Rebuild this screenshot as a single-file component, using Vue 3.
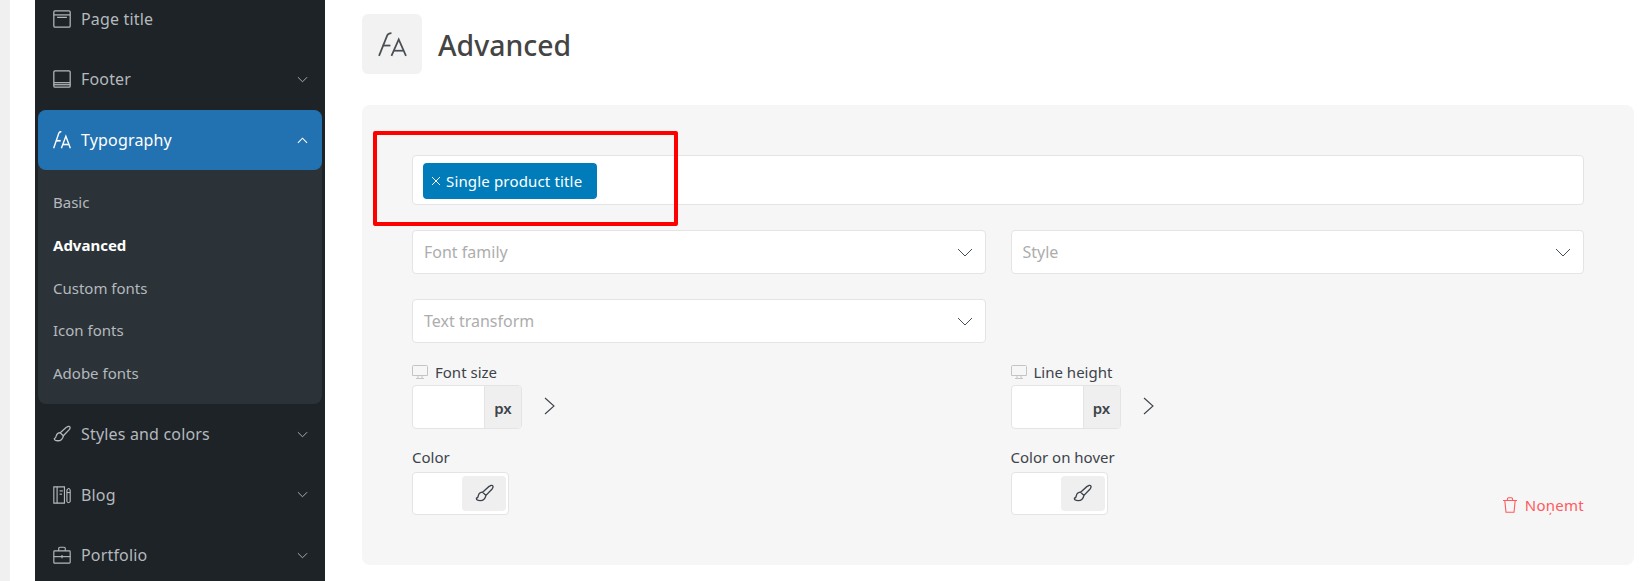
<script setup>
const fa = ['M1 23 L9 3 Q10 1 13 1', 'M4.5 13 H12', 'M13 23 L20 7 L27 23', 'M15.5 18 H24.5']
const brush = ['M17 1.5 Q18.8 1 19 3 Q19 4 18 5.2 L11.5 12 L8 8.6 L14.5 2.8 Z', 'M8 8.6 Q4.5 8.6 3.6 12 Q3.4 14.4 1.5 15 Q1.3 17.5 5.5 17.5 Q10.5 17.5 11.5 12']
const top = [
  { label: 'Page title', icon: ['M2.5 1 H19.5 Q21 1 21 2.5 V19.5 Q21 21 19.5 21 H2.5 Q1 21 1 19.5 V2.5 Q1 1 2.5 1 Z', 'M1 6 H21', 'M5 9 H17'], chevron: false },
  { label: 'Footer', icon: ['M2.5 1 H19.5 Q21 1 21 2.5 V19.5 Q21 21 19.5 21 H2.5 Q1 21 1 19.5 V2.5 Q1 1 2.5 1 Z', 'M1 15.5 H21', 'M1 18 H21'], chevron: true }
]
const sub = ['Basic', 'Advanced', 'Custom fonts', 'Icon fonts', 'Adobe fonts']
const bottom = [
  { label: 'Styles and colors', icon: brush, box: '0 0 20 20' },
  { label: 'Blog', icon: ['M1 1 H14 V21 H1 Z', 'M5 1 V21', 'M8 6 H12', 'M8 10 H11', 'M17 5 Q19.5 1 21 5 V19 Q19 22 17 19 Z', 'M17 8 H21'], box: '0 0 22 22' },
  { label: 'Portfolio', icon: ['M2 6 H20 Q21 6 21 7 V20 Q21 21 20 21 H2 Q1 21 1 20 V7 Q1 6 2 6 Z', 'M7 6 V3 Q7 1.5 8.5 1.5 H13.5 Q15 1.5 15 3 V6', 'M1 13 H21', 'M11 11 V15'], box: '0 0 22 22' }
]
const selects = [
  { text: 'Font family' },
  { text: 'Style' },
  { text: 'Text transform' }
]
const sizes = ['Font size', 'Line height']
const colors = ['Color', 'Color on hover']
</script>

<template>
  <div class="page">
    <div class="strip"></div>
    <aside class="sidebar">
      <div v-for="item in top" :key="item.label" class="row">
        <svg class="ico" viewBox="0 0 22 22" fill="none" stroke="currentColor" stroke-width="1.5"><path v-for="d in item.icon" :key="d" :d="d" /></svg>
        <span>{{ item.label }}</span>
        <svg v-if="item.chevron" class="chev" viewBox="0 0 12 7" fill="none" stroke="currentColor" stroke-width="1"><path d="M1 1 L6 6 L11 1" /></svg>
      </div>
      <div class="group">
        <div class="row active">
          <svg class="ico fa" viewBox="0 0 28 24" preserveAspectRatio="none" fill="none" stroke="currentColor" stroke-width="2.2"><path v-for="d in fa" :key="d" :d="d" /></svg>
          <span>Typography</span>
          <svg class="chev" viewBox="0 0 12 7" fill="none" stroke="currentColor" stroke-width="1.2"><path d="M1 6 L6 1 L11 6" /></svg>
        </div>
        <ul class="sub">
          <li v-for="s in sub" :key="s" :class="{ current: s === 'Advanced' }">{{ s }}</li>
        </ul>
      </div>
      <div v-for="item in bottom" :key="item.label" class="row">
        <svg class="ico" :viewBox="item.box" fill="none" stroke="currentColor" stroke-width="1.4"><path v-for="d in item.icon" :key="d" :d="d" /></svg>
        <span>{{ item.label }}</span>
        <svg class="chev" viewBox="0 0 12 7" fill="none" stroke="currentColor" stroke-width="1"><path d="M1 1 L6 6 L11 1" /></svg>
      </div>
    </aside>
    <main class="main">
      <header class="head">
        <div class="head-icon">
          <svg viewBox="0 0 28 24" fill="none" stroke="currentColor" stroke-width="1.7"><path v-for="d in fa" :key="d" :d="d" /></svg>
        </div>
        <h1>Advanced</h1>
      </header>
      <section class="panel">
        <div class="tags">
          <span class="tag"><svg viewBox="0 0 10 10" fill="none" stroke="currentColor" stroke-width="1"><path d="M1 1 L9 9 M9 1 L1 9" /></svg>Single product title</span>
        </div>
        <div class="grid">
          <div v-for="s in selects" :key="s.text" class="select">
            <span>{{ s.text }}</span>
            <svg viewBox="0 0 16 9" fill="none" stroke="currentColor" stroke-width="1"><path d="M1 1 L8 8 L15 1" /></svg>
          </div>
          <div class="blank"></div>
        </div>
        <div class="sizes">
          <div v-for="s in sizes" :key="s">
            <label class="lbl"><svg class="mon" viewBox="0 0 16 14" fill="none" stroke="currentColor" stroke-width="1"><path d="M1.5 .5 H14.5 Q15.5 .5 15.5 1.5 V10.5 H.5 V1.5 Q.5 .5 1.5 .5 Z M6 10.5 V13 M10 10.5 V13 M4 13.5 H12" /></svg>{{ s }}</label>
            <div class="size-row">
              <div class="unit"><span class="in"></span><span class="px">px</span></div>
              <svg class="next" viewBox="0 0 11 18" fill="none" stroke="currentColor" stroke-width="1.1"><path d="M1 1 L10 9 L1 17" /></svg>
            </div>
          </div>
        </div>
        <div class="colors">
          <div v-for="c in colors" :key="c" class="color-cell">
            <div>
              <label class="lbl">{{ c }}</label>
              <div class="picker">
                <span class="swatch">
                  <svg viewBox="0 0 20 20" fill="none" stroke="currentColor" stroke-width="1.4"><path v-for="d in brush" :key="d" :d="d" /></svg>
                </span>
              </div>
            </div>
            <a v-if="c === 'Color on hover'" class="remove">
              <svg viewBox="0 0 16 16" fill="none" stroke="currentColor" stroke-width="1.1"><path d="M1 3.5 H15 M5.5 3.5 V1.8 Q5.5 .8 6.5 .8 H9.5 Q10.5 .8 10.5 1.8 V3.5 M2.8 3.5 L4 15.3 H12 L13.2 3.5" /></svg>
              Noņemt
            </a>
          </div>
        </div>
        <div class="marker"></div>
      </section>
    </main>
  </div>
</template>

<style>
html, body { margin: 0; background: #fff; overflow: hidden; }
</style>

<style scoped>
.page { display: flex; height: 581px; overflow: hidden; font-family: "Noto Sans", "Open Sans", sans-serif; color: #3c434a; background: #fff; }
.strip { width: 10px; background: #f0f0f0; flex: none; }
.sidebar { flex: none; width: 290px; margin-left: 25px; margin-top: -11px; height: 600px; background: #1d2327; color: #b4b9be; padding: 0 3px; box-sizing: border-box; }
.row { display: flex; align-items: center; height: 60px; padding: 0 14px 0 15px; font-size: 16px; letter-spacing: .17px; }
.row + .row { margin-top: .4px; }
.ico { width: 18px; height: 18px; margin-right: 10px; flex: none; }
.chev { width: 11px; height: 7px; margin-left: auto; flex: none; }
.group { background: #2c3338; border-radius: 8px; margin-top: 1px; }
.active { background: #2271b1; color: #fff; border-radius: 8px; }
.sub { list-style: none; margin: 0; padding: 11px 15px 10px; font-size: 15px; }
.sub li { height: 42.6px; line-height: 42.6px; }
.sub .current { color: #fff; font-weight: 700; }
.main { flex: 1; padding: 14px 8px 0 37px; min-width: 0; }
.head { display: flex; align-items: center; gap: 16px; height: 60px; }
.head-icon { width: 60px; height: 60px; background: #f2f2f2; border-radius: 6px; display: flex; align-items: center; justify-content: center; color: #4a4f54; }
.head-icon svg { width: 29px; height: 25px; }
h1 { margin: 0; padding-top: 2px; font-size: 28.4px; font-weight: 500; color: #444; }
.panel { position: relative; margin-top: 31px; background: #f6f6f6; border-radius: 8px; padding: 50px; height: 460px; box-sizing: border-box; }
.tags { background: #fff; border: 1px solid #e4e4e4; border-radius: 4px; height: 50px; box-sizing: border-box; padding: 7px 10px; }
.tag { display: inline-flex; align-items: center; height: 36px; width: 174px; box-sizing: border-box; padding-left: 8px; background: #007cba; color: #fff; border-radius: 4px; font-size: 15px; letter-spacing: .16px; white-space: nowrap; }
.tag svg { width: 10px; height: 10px; margin-right: 5px; }
.grid { display: grid; grid-template-columns: 1fr 1fr; gap: 25px; margin-top: 25px; }
.select { display: flex; align-items: center; justify-content: space-between; height: 44px; box-sizing: border-box; background: #fff; border: 1px solid #e4e4e4; border-radius: 4px; padding: 0 12px 0 11px; font-size: 16px; color: #adadad; }
.select svg { width: 16px; height: 9px; color: #44505c; }
.sizes { display: grid; grid-template-columns: 1fr 1fr; gap: 25px; margin-top: 19px; }
.lbl { display: flex; align-items: center; font-size: 15px; line-height: 20px; color: #3c434a; }
.mon { width: 16px; height: 14px; margin-right: 7px; color: #c4c4c4; }
.size-row { display: flex; align-items: center; margin-top: 3px; }
.unit { display: flex; width: 110px; height: 44px; box-sizing: border-box; border: 1px solid #e4e4e4; border-radius: 4px; overflow: hidden; background: #fff; }
.in { flex: 1; }
.px { width: 37px; background: #efefef; border-left: 1px solid #e4e4e4; font-size: 15px; font-weight: 600; display: flex; align-items: center; justify-content: center; padding-top: 2px; box-sizing: border-box; }
.next { width: 11px; height: 18px; margin-left: 22px; color: #3c434a; margin-top: -2px; }
.colors { display: grid; grid-template-columns: 1fr 1fr; gap: 25px; margin-top: 18px; }
.color-cell { display: flex; justify-content: space-between; align-items: flex-end; }
.picker { width: 97px; height: 43px; margin-top: 5px; box-sizing: border-box; background: #fff; border: 1px solid #e4e4e4; border-radius: 4px; padding: 3px 2px; display: flex; justify-content: flex-end; }
.swatch { width: 44px; background: #efefef; border-radius: 4px; display: flex; align-items: center; justify-content: center; color: #3c434a; }
.swatch svg { width: 19px; height: 19px; }
.remove { display: flex; align-items: center; gap: 7px; font-size: 15px; letter-spacing: .25px; line-height: 20px; color: #ff5a5f; }
.remove svg { width: 16px; height: 16px; }
.marker { position: absolute; left: 11px; top: 26px; width: 305px; height: 95px; box-sizing: border-box; border: 4px solid #f00; border-radius: 2px; pointer-events: none; }
</style>
